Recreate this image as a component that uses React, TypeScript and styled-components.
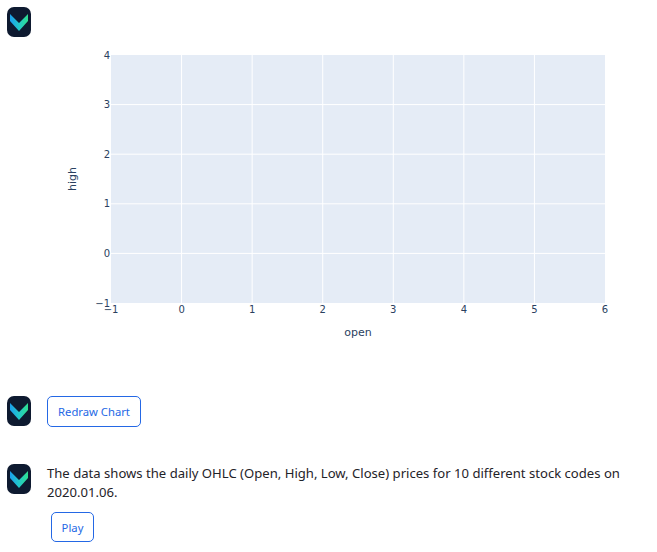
import React from "react";
import styled, { createGlobalStyle } from "styled-components";

const GlobalStyle = createGlobalStyle`
  html, body {
    margin: 0;
    padding: 0;
    background: #fff;
    overflow: hidden;
  }
  body {
    font-family: "Noto Sans", "Open Sans", sans-serif;
  }
`;

const Page = styled.div`
  width: 657px;
  height: 552px;
  padding: 7px 0 0 7px;
  box-sizing: border-box;
  display: flex;
  flex-direction: column;
`;

const Row = styled.div<{ $gap?: number }>`
  display: flex;
  align-items: flex-start;
  gap: 16px;
  margin-bottom: ${(p) => p.$gap ?? 0}px;
`;

const Avatar = styled.svg`
  width: 24px;
  height: 30px;
  flex: none;
`;

const ChartSvg = styled.svg`
  display: block;
  width: 600px;
  height: 396px;
  margin-top: -7px;
  flex: none;
`;

const Tick = styled.text`
  font-family: "DejaVu Sans", sans-serif;
  font-size: 10px;
  fill: #2a3f5f;
`;

const AxisTitle = styled.text`
  font-family: "DejaVu Sans", sans-serif;
  font-size: 11px;
  fill: #2a3f5f;
`;

const Column = styled.div`
  display: flex;
  flex-direction: column;
  align-items: flex-start;
`;

const Message = styled.p`
  margin: 0;
  width: 590px;
  font-size: 13.1px;
  line-height: 19px;
  color: #1f2329;
`;

const Button = styled.button<{ $inset?: number }>`
  height: ${(p) => (p.$inset ? 30 : 31)}px;
  width: ${(p) => (p.$inset ? 43 : 94)}px;
  padding: 0;
  margin-left: ${(p) => p.$inset ?? 0}px;
  margin-top: ${(p) => (p.$inset ? 10 : 0)}px;
  background: #fff;
  border: 1px solid #2468e5;
  border-radius: 5px;
  color: #2468e5;
  font-family: inherit;
  font-size: 11.25px;
`;

function Logo({ id }: { id: string }) {
  return (
    <Avatar viewBox="0 0 24 30">
      <defs>
        <linearGradient id={id} x1="0" y1="0" x2="1" y2="0">
          <stop offset="0" stopColor="#1b9fee" />
          <stop offset="0.5" stopColor="#22c8c8" />
          <stop offset="1" stopColor="#2fe08f" />
        </linearGradient>
      </defs>
      <rect width="24" height="30" rx="7" fill="#0e1a30" />
      <path d="M3 7 L12 16 L21 7 L21 14 L12 24 L3 14 Z" fill={`url(#${id})`} />
    </Avatar>
  );
}

const plot = { left: 64, right: 558, top: 55, bottom: 303 };
const xTicks = [-1, 0, 1, 2, 3, 4, 5, 6];
const yTicks = [-1, 0, 1, 2, 3, 4];
const xPos = (v: number) => plot.left + ((v + 1) / 7) * (plot.right - plot.left);
const yPos = (v: number) => plot.bottom - ((v + 1) / 5) * (plot.bottom - plot.top);
const label = (v: number) => (v < 0 ? `\u2212${-v}` : `${v}`);

function Chart() {
  return (
    <ChartSvg viewBox="0 0 600 396">
      <rect
        x={plot.left}
        y={plot.top}
        width={plot.right - plot.left}
        height={plot.bottom - plot.top}
        fill="#e5ecf6"
      />
      {xTicks.slice(1, -1).map((v) => (
        <line key={v} x1={xPos(v)} x2={xPos(v)} y1={plot.top} y2={plot.bottom} stroke="#fff" />
      ))}
      {yTicks.slice(1, -1).map((v) => (
        <line key={v} x1={plot.left} x2={plot.right} y1={yPos(v)} y2={yPos(v)} stroke="#fff" />
      ))}
      {xTicks.map((v) => (
        <Tick key={v} x={xPos(v)} y={313} textAnchor="middle">
          {label(v)}
        </Tick>
      ))}
      {yTicks.map((v) => (
        <Tick key={v} x={plot.left - 1} y={yPos(v) + 3.5} textAnchor="end">
          {label(v)}
        </Tick>
      ))}
      <AxisTitle x={311} y={336} textAnchor="middle">
        open
      </AxisTitle>
      <AxisTitle x={29} y={179} textAnchor="middle" transform="rotate(-90 29 179)">
        high
      </AxisTitle>
    </ChartSvg>
  );
}

export default function App() {
  return (
    <Page>
      <GlobalStyle />
      <Row>
        <Logo id="logo-a" />
        <Chart />
      </Row>
      <Row $gap={37}>
        <Logo id="logo-b" />
        <Button>Redraw Chart</Button>
      </Row>
      <Row>
        <Logo id="logo-c" />
        <Column>
          <Message>
            The data shows the daily OHLC (Open, High, Low, Close) prices for 10 different stock
            codes on 2020.01.06.
          </Message>
          <Button $inset={4}>Play</Button>
        </Column>
      </Row>
    </Page>
  );
}
